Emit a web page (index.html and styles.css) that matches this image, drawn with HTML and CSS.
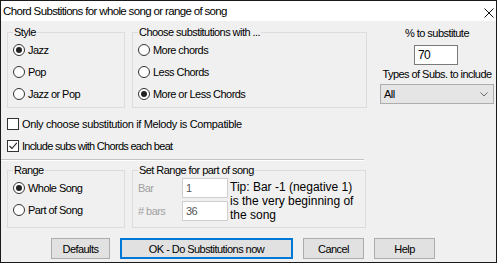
FILE: index.html
```html
<!DOCTYPE html>
<html>
<head>
<meta charset="utf-8">
<link rel="stylesheet" href="styles.css">
</head>
<body>
<div class="window">
  <div class="titlebar">
    <span class="title">Chord Substitions for whole song or range of song</span>
    <svg class="close" width="10" height="10" viewBox="0 0 10 10"><path d="M0.5 0.5 L9.5 9.5 M9.5 0.5 L0.5 9.5" stroke="#111" stroke-width="1" fill="none"/></svg>
  </div>
  <div class="content">
    <div class="toprow">
      <fieldset class="group g-style">
        <legend>Style</legend>
        <div class="radio"><span class="rb on"></span>Jazz</div>
        <div class="radio"><span class="rb"></span>Pop</div>
        <div class="radio"><span class="rb"></span>Jazz or Pop</div>
      </fieldset>
      <fieldset class="group g-choose">
        <legend>Choose substitutions with ...</legend>
        <div class="radio"><span class="rb"></span>More chords</div>
        <div class="radio"><span class="rb"></span>Less Chords</div>
        <div class="radio"><span class="rb on"></span>More or Less Chords</div>
      </fieldset>
      <div class="rightcol">
        <div class="lbl">% to substitute</div>
        <div class="tbox pct">70</div>
        <div class="lbl lbl2">Types of Subs. to include</div>
        <div class="combo"><span>All</span><svg width="8" height="5" viewBox="0 0 8 5"><path d="M0.5 0.5 L4 4 L7.5 0.5" stroke="#666" stroke-width="1" fill="none"/></svg></div>
      </div>
    </div>
    <div class="checks">
      <div class="check"><span class="cb"></span><span class="ck-only">Only choose substitution if Melody is Compatible</span></div>
      <div class="check"><span class="cb"><svg width="10" height="10" viewBox="0 0 10 10"><path d="M1.5 5 L4 7.5 L8.8 1.8" stroke="#222" stroke-width="1.1" fill="none"/></svg></span><span class="ck-incl">Include subs with Chords each beat</span></div>
    </div>
    <div class="sep"></div>
    <div class="midrow">
      <fieldset class="group g-range">
        <legend>Range</legend>
        <div class="radio"><span class="rb on"></span>Whole Song</div>
        <div class="radio"><span class="rb"></span>Part of Song</div>
      </fieldset>
      <fieldset class="group g-set">
        <legend>Set Range for part of song</legend>
        <div class="setbody">
          <div class="fields">
            <div class="frow"><span class="dlbl">Bar</span><span class="tbox dis">1</span></div>
            <div class="frow"><span class="dlbl"># bars</span><span class="tbox dis">36</span></div>
          </div>
          <div class="tip">Tip: Bar -1 (negative 1) is the very beginning of the song</div>
        </div>
      </fieldset>
    </div>
    <div class="buttons">
      <div class="btn b-def">Defaults</div>
      <div class="btn b-ok">OK - Do Substitutions now</div>
      <div class="btn b-cancel">Cancel</div>
      <div class="btn b-help">Help</div>
    </div>
  </div>
</div>
</body>
</html>
```
FILE: styles.css
```css
* { box-sizing: border-box; }
html, body { margin: 0; padding: 0; background: #f0f0f0; }
body {
  font-family: "Liberation Sans", Arial, sans-serif;
  font-size: 11px;
  line-height: 14px;
  letter-spacing: -0.55px;
  color: #000;
  white-space: nowrap;
}
.window {
  width: 497px;
  height: 263px;
  border: 1px solid #1a1a1a;
  background: #f0f0f0;
  display: flex;
  flex-direction: column;
}
.titlebar {
  height: 20px;
  background: #fff;
  display: flex;
  align-items: center;
  justify-content: space-between;
  padding: 0 2px 0 2px;
  font-size: 11.5px;
  letter-spacing: -0.65px;
}
.close { margin-top: 4px; }
.content {
  padding: 4px 0 0 6px;
}
.toprow { display: flex; align-items: flex-start; }
.group {
  margin: 0;
  border: 1px solid #dcdcdc;
  padding: 0 0 2px 5px;
  min-width: 0;
}
.group legend {
  padding: 0 1px;
  line-height: 14px;
}
.g-style { width: 118px; margin-right: 7px; }
.g-choose { width: 235px; }
.radio {
  height: 22px;
  display: flex;
  align-items: center;
}
.rb {
  width: 12px;
  height: 12px;
  border: 1px solid #333;
  border-radius: 50%;
  background: #fff;
  margin-right: 3px;
  position: relative;
  flex: none;
}
.rb.on::after {
  content: "";
  position: absolute;
  left: 2px;
  top: 2px;
  width: 6px;
  height: 6px;
  border-radius: 50%;
  background: #222;
}
.rightcol {
  width: 114px;
  margin-left: 13px;
  margin-top: 1px;
  display: flex;
  flex-direction: column;
  align-items: center;
}
.lbl { line-height: 14px; }
.lbl2 { margin-top: 2px; }
.tbox {
  background: #fff;
  border: 1px solid #7a7a7a;
  height: 20px;
  padding-left: 3px;
  display: flex;
  align-items: center;
}
.pct { width: 44px; margin-top: 5px; margin-left: -2px; font-size: 12px; }
.combo {
  margin-top: 3px;
  width: 114px;
  height: 20px;
  background: #e5e5e5;
  border: 1px solid #adadad;
  display: flex;
  align-items: center;
  justify-content: space-between;
  padding: 0 5px 0 3px;
}
.checks { margin-top: 5px; }
.check {
  height: 22px;
  display: flex;
  align-items: center;
}
.ck-only { letter-spacing: -0.35px; }
.ck-incl { letter-spacing: -0.7px; }
.cb {
  width: 12px;
  height: 12px;
  border: 1px solid #333;
  background: #fff;
  margin-right: 3px;
  flex: none;
  display: flex;
  align-items: center;
  justify-content: center;
}
.sep {
  margin-top: 2px;
  margin-left: -6px;
  width: 363px;
  height: 2px;
  border-top: 1px solid #c4c4c4;
  border-bottom: 1px solid #fff;
}
.midrow { display: flex; margin-top: 2px; }
.g-range { width: 118px; margin-right: 7px; padding-bottom: 5px; }
.g-set { width: 234px; padding-bottom: 5px; }
.setbody { display: flex; }
.fields { margin-top: 1px; display: flex; flex-direction: column; gap: 3px; }
.frow { display: flex; align-items: center; }
.dlbl { width: 44px; color: #a0a0a0; }
.tbox.dis {
  width: 46px;
  border-color: #cfcfcf;
  color: #555;
}
.tip {
  font-size: 12px;
  line-height: 14px;
  letter-spacing: 0;
  white-space: normal;
  margin-left: 2px;
  margin-top: 3px;
  width: 128px;
}
.buttons {
  display: flex;
  gap: 10px;
  margin-top: 10px;
  margin-left: 44px;
}
.btn {
  height: 21px;
  background: #e1e1e1;
  border: 1px solid #adadad;
  display: flex;
  align-items: center;
  justify-content: center;
}
.b-def { width: 59px; }
.b-ok { width: 173px; border: 2px solid #0078d7; }
.b-cancel { width: 61px; }
.b-help { width: 61px; }
```
